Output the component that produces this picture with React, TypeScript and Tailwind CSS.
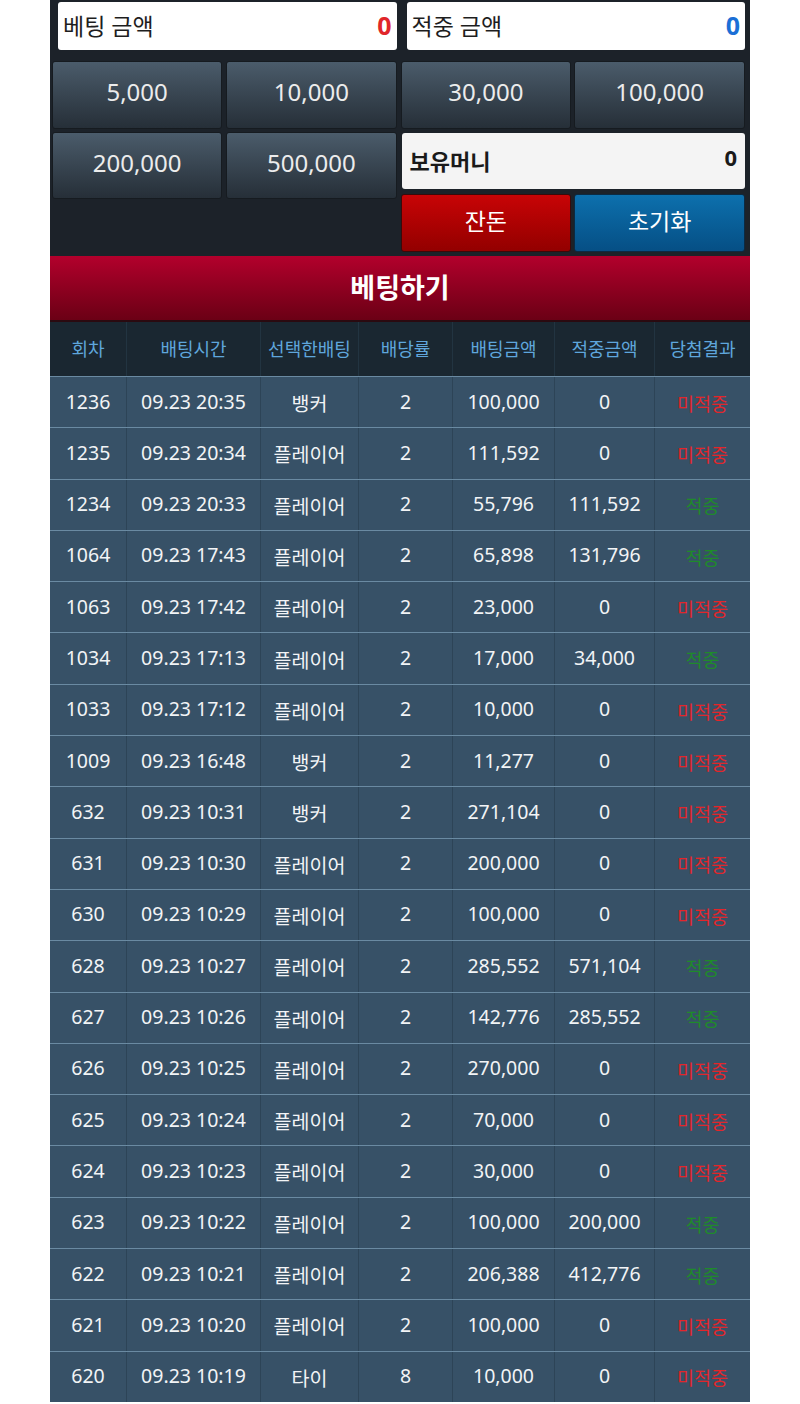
import React from 'react';

type Bet = {
  round: string;
  time: string;
  pick: string;
  odds: string;
  amount: string;
  win: string;
  hit: boolean;
};

const bets: Bet[] = [
  { round: '1236', time: '09.23 20:35', pick: '뱅커', odds: '2', amount: '100,000', win: '0', hit: false },
  { round: '1235', time: '09.23 20:34', pick: '플레이어', odds: '2', amount: '111,592', win: '0', hit: false },
  { round: '1234', time: '09.23 20:33', pick: '플레이어', odds: '2', amount: '55,796', win: '111,592', hit: true },
  { round: '1064', time: '09.23 17:43', pick: '플레이어', odds: '2', amount: '65,898', win: '131,796', hit: true },
  { round: '1063', time: '09.23 17:42', pick: '플레이어', odds: '2', amount: '23,000', win: '0', hit: false },
  { round: '1034', time: '09.23 17:13', pick: '플레이어', odds: '2', amount: '17,000', win: '34,000', hit: true },
  { round: '1033', time: '09.23 17:12', pick: '플레이어', odds: '2', amount: '10,000', win: '0', hit: false },
  { round: '1009', time: '09.23 16:48', pick: '뱅커', odds: '2', amount: '11,277', win: '0', hit: false },
  { round: '632', time: '09.23 10:31', pick: '뱅커', odds: '2', amount: '271,104', win: '0', hit: false },
  { round: '631', time: '09.23 10:30', pick: '플레이어', odds: '2', amount: '200,000', win: '0', hit: false },
  { round: '630', time: '09.23 10:29', pick: '플레이어', odds: '2', amount: '100,000', win: '0', hit: false },
  { round: '628', time: '09.23 10:27', pick: '플레이어', odds: '2', amount: '285,552', win: '571,104', hit: true },
  { round: '627', time: '09.23 10:26', pick: '플레이어', odds: '2', amount: '142,776', win: '285,552', hit: true },
  { round: '626', time: '09.23 10:25', pick: '플레이어', odds: '2', amount: '270,000', win: '0', hit: false },
  { round: '625', time: '09.23 10:24', pick: '플레이어', odds: '2', amount: '70,000', win: '0', hit: false },
  { round: '624', time: '09.23 10:23', pick: '플레이어', odds: '2', amount: '30,000', win: '0', hit: false },
  { round: '623', time: '09.23 10:22', pick: '플레이어', odds: '2', amount: '100,000', win: '200,000', hit: true },
  { round: '622', time: '09.23 10:21', pick: '플레이어', odds: '2', amount: '206,388', win: '412,776', hit: true },
  { round: '621', time: '09.23 10:20', pick: '플레이어', odds: '2', amount: '100,000', win: '0', hit: false },
  { round: '620', time: '09.23 10:19', pick: '타이', odds: '8', amount: '10,000', win: '0', hit: false },
];

const widths = ['w-[76px]', 'w-[134px]', 'w-[98px]', 'w-[94px]', 'w-[102px]', 'w-[100px]', 'flex-1'];
const headers = ['회차', '배팅시간', '선택한배팅', '배당률', '배팅금액', '적중금액', '당첨결과'];

const ChipButton = ({ label }: { label: string }) => (
  <button className="flex-1 h-full pb-[6px] rounded-[3px] border border-[#161b20] bg-gradient-to-b from-[#4b5c6b] to-[#262f38] text-[24px] text-[#ececec]">
    {label}
  </button>
);

const App = () => {
  return (
    <div className="min-h-[1404px] bg-white font-['Noto_Sans','Noto_Sans_CJK_KR',sans-serif]">
      <div className="w-[700px] mx-auto">
        {/* Bet controls */}
        <div className="bg-[#1c2229] pl-[2px] pr-[5px] pt-[2px] pb-[4px]">
          <div className="flex gap-[10px] pl-[6px] h-[48px]">
            <div className="flex-1 flex items-center justify-between bg-white rounded-[3px] px-[5px]">
              <span className="text-[23px] text-[#1e1e1e]">베팅 금액</span>
              <span className="text-[25px] font-bold text-[#e0262a]">0</span>
            </div>
            <div className="flex-1 flex items-center justify-between bg-white rounded-[3px] px-[5px]">
              <span className="text-[23px] text-[#1e1e1e]">적중 금액</span>
              <span className="text-[25px] font-bold text-[#1b6fd6]">0</span>
            </div>
          </div>

          <div className="flex gap-[4px] mt-[11px]">
            <div className="flex-1 flex flex-col gap-[3px]">
              <div className="flex gap-[4px] h-[68px]">
                <ChipButton label="5,000" />
                <ChipButton label="10,000" />
              </div>
              <div className="flex gap-[4px] h-[67px]">
                <ChipButton label="200,000" />
                <ChipButton label="500,000" />
              </div>
            </div>
            <div className="flex-1 flex flex-col">
              <div className="flex gap-[3px] h-[68px]">
                <ChipButton label="30,000" />
                <ChipButton label="100,000" />
              </div>
              <div className="mt-[4px] ml-[1px] h-[56px] flex items-center justify-between bg-[#f4f4f4] rounded-[3px] px-[8px]">
                <span className="text-[22px] font-bold text-[#1a1a1a]">보유머니</span>
                <span className="text-[22px] font-bold text-[#1a1a1a] -mt-[8px]">0</span>
              </div>
              <div className="flex gap-[3px] h-[58px] mt-[5px]">
                <button className="flex-1 pb-[4px] rounded-[3px] border border-[#3a0a0a] bg-gradient-to-b from-[#c80406] to-[#930000] text-[23px] text-white">
                  잔돈
                </button>
                <button className="flex-1 pb-[4px] rounded-[3px] border border-[#0c2a42] bg-gradient-to-b from-[#0d70ad] to-[#064f85] text-[23px] text-white">
                  초기화
                </button>
              </div>
            </div>
          </div>
        </div>

        {/* Submit bar */}
        <div className="h-[66px] flex items-center justify-center bg-gradient-to-b from-[#b3002c] to-[#6b0015] border-b-2 border-[#2a0a10]">
          <span className="text-[27px] font-bold text-white">베팅하기</span>
        </div>

        {/* History table */}
        <div className="flex h-[54px] bg-[#1a2731]">
          {headers.map((h, i) => (
            <div
              key={h}
              className={`${widths[i]} flex items-center justify-center text-[18px] text-[#5fa6dc] ${i > 0 ? 'border-l border-[#223441]' : ''}`}
            >
              {h}
            </div>
          ))}
        </div>
        {bets.map((b) => {
          const cells = [b.round, b.time, b.pick, b.odds, b.amount, b.win];
          return (
            <div key={b.round} className="flex h-[51.3px] bg-[#375167] border-t border-[#6a8aa2]">
              {cells.map((c, i) => (
                <div
                  key={i}
                  className={`${widths[i]} flex items-center justify-center text-[19.5px] text-[#f2f4f6] ${i > 0 ? 'border-l border-[#2d4457]' : ''} ${i === 2 ? 'pt-[3px]' : 'pb-[2px]'}`}
                >
                  {c}
                </div>
              ))}
              <div
                className={`flex-1 flex items-center justify-center pt-[3px] text-[18.5px] border-l border-[#2d4457] ${b.hit ? 'text-[#1f8a2b]' : 'text-[#e2262b]'}`}
              >
                {b.hit ? '적중' : '미적중'}
              </div>
            </div>
          );
        })}
      </div>
    </div>
  );
};

export default App;
